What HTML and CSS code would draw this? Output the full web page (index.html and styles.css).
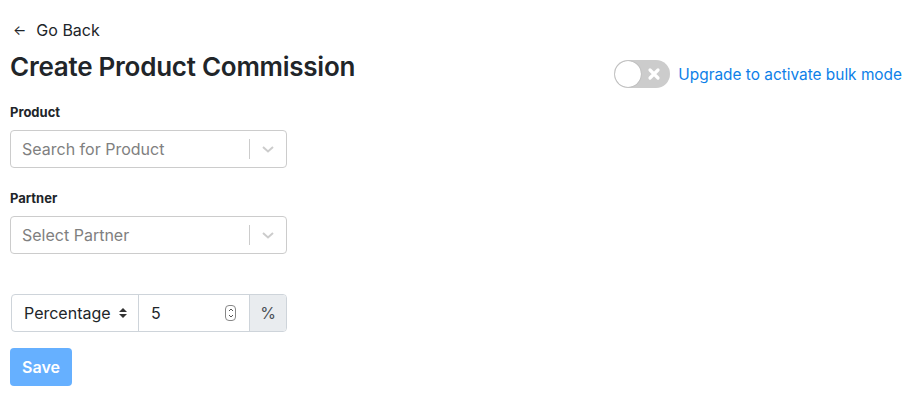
FILE: index.html
```html
<!DOCTYPE html>
<html>
<head>
<meta charset="utf-8">
<link rel="stylesheet" href="styles.css">
</head>
<body>
<div class="page">
  <a class="back" href="#"><span class="arrow">←</span>Go Back</a>
  <div class="header">
    <h3 class="title">Create Product Commission</h3>
    <div class="bulk">
      <span class="toggle">
        <span class="knob"></span>
        <svg class="x" width="14" height="14" viewBox="0 0 14 14"><path d="M3 3 L11 11 M11 3 L3 11" stroke="#fff" stroke-width="3.2" stroke-linecap="round"/></svg>
      </span>
      <a class="upgrade" href="#">Upgrade to activate bulk mode</a>
    </div>
  </div>
  <div class="field">
    <label class="label">Product</label>
    <div class="select">
      <span class="placeholder">Search for Product</span>
      <span class="sep"></span>
      <svg class="chev" width="20" height="20" viewBox="0 0 20 20"><path d="M5 8 L10 12.5 L15 8" fill="none" stroke="#ccc" stroke-width="2"/></svg>
    </div>
  </div>
  <div class="field partner">
    <label class="label">Partner</label>
    <div class="select">
      <span class="placeholder">Select Partner</span>
      <span class="sep"></span>
      <svg class="chev" width="20" height="20" viewBox="0 0 20 20"><path d="M5 8 L10 12.5 L15 8" fill="none" stroke="#ccc" stroke-width="2"/></svg>
    </div>
  </div>
  <div class="group">
    <div class="g-select">Percentage
      <svg width="10" height="12" viewBox="0 0 10 12"><path d="M1 5 L5 1 L9 5 Z M1 7 L5 11 L9 7 Z" fill="#333"/></svg>
    </div>
    <div class="g-input">5
      <span class="spin"><svg width="8" height="14" viewBox="0 0 8 14"><path d="M2 5 L4 3 L6 5 M2 9 L4 11 L6 9" fill="none" stroke="#555" stroke-width="1"/></svg></span>
    </div>
    <div class="g-addon">%</div>
  </div>
  <button class="save">Save</button>
</div>
</body>
</html>
```
FILE: styles.css
```css
* { box-sizing: border-box; }
body {
  margin: 0;
  font-family: Inter, "Liberation Sans", sans-serif;
  color: #212529;
  background: #fff;
}
.page {
  padding: 18px 12px 0 10px;
  display: flex;
  flex-direction: column;
}
.back {
  color: #212529;
  text-decoration: none;
  font-size: 16px;
  line-height: 24px;
  display: flex;
  align-items: center;
  padding-left: 3px;
}
.arrow { font-size: 14px; margin-right: 10px; }
.header {
  display: flex;
  justify-content: space-between;
  align-items: flex-start;
  margin-top: 9px;
}
.title {
  margin: 0;
  font-size: 26px;
  font-weight: 600;
  line-height: 32px;
  letter-spacing: -0.25px;
}
.bulk {
  display: flex;
  align-items: center;
  margin-top: 9px;
}
.toggle {
  width: 56px;
  height: 28px;
  border-radius: 14px;
  background: #ccc;
  display: flex;
  align-items: center;
  justify-content: space-between;
  padding: 0 9px 0 1px;
}
.knob {
  width: 26px;
  height: 26px;
  border-radius: 50%;
  background: #fff;
  box-shadow: 0 0 1px rgba(0,0,0,.4);
}
.upgrade {
  margin-left: 8px;
  color: #0d7fe8;
  text-decoration: none;
  font-size: 15.4px;
}
.field { display: flex; flex-direction: column; }
.label {
  font-size: 13px;
  font-weight: 700;
  margin-top: 14px;
  line-height: 20px;
}
.select {
  margin-top: 8px;
  width: 277px;
  height: 38px;
  border: 1px solid #ccc;
  border-radius: 4px;
  display: flex;
  align-items: center;
  padding-left: 11px;
}
.placeholder { color: #808080; font-size: 16px; flex: 1; }
.sep { width: 1px; height: 20px; background: #ccc; }
.chev { margin: 0 8px 0 8px; }
.partner .label { margin-top: 20px; }
.group {
  margin-top: 40px;
  margin-left: 1px;
  width: 276px;
  height: 38px;
  display: flex;
  border: 1px solid #ced4da;
  border-radius: 4px;
  font-size: 16px;
}
.g-select {
  width: 127px;
  display: flex;
  align-items: center;
  justify-content: space-between;
  padding: 0 10px 0 12px;
  border-right: 1px solid #ced4da;
}
.g-input {
  width: 111px;
  display: flex;
  align-items: center;
  justify-content: space-between;
  padding: 0 13px 0 12px;
  border-right: 1px solid #ced4da;
}
.spin {
  width: 11px; height: 16px; border: 1px solid #888; border-radius: 4px;
  display: flex; align-items: center; justify-content: center;
}
.g-addon {
  flex: 1;
  background: #e9ecef;
  display: flex;
  align-items: center;
  justify-content: center;
  color: #495057;
  border-radius: 0 3px 3px 0;
}
.save {
  margin-top: 16px;
  align-self: flex-start;
  width: 62px;
  height: 38px;
  border: none;
  border-radius: 4px;
  background: #66b0ff;
  color: #fff;
  font-family: inherit;
  font-size: 16px;
  font-weight: 600;
}
```
